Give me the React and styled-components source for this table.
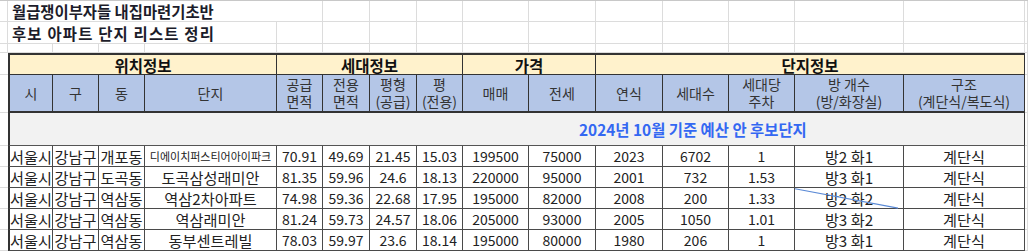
import React from "react";
import styled, { createGlobalStyle } from "styled-components";

const COLS = [45, 46, 46, 132, 46, 47, 47, 46, 66, 67, 67, 66, 66, 109, 121];

const groups = [
  { label: "위치정보", span: 4 },
  { label: "세대정보", span: 4 },
  { label: "가격", span: 2 },
  { label: "단지정보", span: 5 },
];

const subHeads = [
  "시",
  "구",
  "동",
  "단지",
  "공급\n면적",
  "전용\n면적",
  "평형\n(공급)",
  "평\n(전용)",
  "매매",
  "전세",
  "연식",
  "세대수",
  "세대당\n주차",
  "방 개수\n(방/화장실)",
  "구조\n(계단식/복도식)",
];

const rows = [
  ["서울시", "강남구", "개포동", "디에이치퍼스티어아이파크", "70.91", "49.69", "21.45", "15.03", "199500", "75000", "2023", "6702", "1", "방2 화1", "계단식"],
  ["서울시", "강남구", "도곡동", "도곡삼성래미안", "81.35", "59.96", "24.6", "18.13", "220000", "95000", "2001", "732", "1.53", "방3 화1", "계단식"],
  ["서울시", "강남구", "역삼동", "역삼2차아파트", "74.98", "59.36", "22.68", "17.95", "195000", "82000", "2008", "200", "1.33", "방2 화2", "계단식"],
  ["서울시", "강남구", "역삼동", "역삼래미안", "81.24", "59.73", "24.57", "18.06", "205000", "93000", "2005", "1050", "1.01", "방3 화2", "계단식"],
  ["서울시", "강남구", "역삼동", "동부센트레빌", "78.03", "59.97", "23.6", "18.14", "195000", "80000", "1980", "206", "1", "방3 화1", "계단식"],
];

const hasHangul = (v) => /[가-힣]/.test(v);

const GlobalStyle = createGlobalStyle`
  body {
    margin: 0;
    background: #ffffff;
    font-family: "Noto Sans CJK KR", "Noto Sans", sans-serif;
  }
`;

const Sheet = styled.div`
  position: relative;
  display: grid;
  grid-template-columns: 8px ${COLS.map((c) => `${c}px`).join(" ")} 1fr;
  grid-template-rows: 21px 22px 9px 22px 38px 33px repeat(5, 21px);
  border-top: 1px solid #c8c8c8;
  width: 1028px;
`;

const GridCell = styled.div`
  box-sizing: border-box;
  border-right: ${(p) => (p.$noRight ? "none" : "1px solid #dcdcdc")};
  border-bottom: 1px solid #dcdcdc;
`;

const Title = styled.div`
  grid-column: span ${(p) => p.$span};
  box-sizing: border-box;
  border-right: 1px solid #dcdcdc;
  border-bottom: 1px solid #dcdcdc;
  display: flex;
  align-items: center;
  padding-left: 4px;
  font-size: 15.4px;
  font-weight: 700;
  color: #1c1c2a;
  letter-spacing: ${(p) => p.$spacing || 0}px;
  white-space: nowrap;
`;

const GroupHead = styled.div`
  grid-column: span ${(p) => p.$span};
  box-sizing: border-box;
  background: #fff2cc;
  border-top: 2px solid #333;
  border-right: 1px solid #333;
  border-bottom: 1px solid #333;
  border-left: ${(p) => (p.$first ? "2px solid #333" : "none")};
  display: flex;
  align-items: center;
  justify-content: center;
  font-size: 15.5px;
  font-weight: 700;
  color: #111;
`;

const SubHead = styled.div`
  box-sizing: border-box;
  background: #b4c6e7;
  border-right: 1px solid #333;
  border-bottom: 2px solid #333;
  border-left: ${(p) => (p.$first ? "2px solid #333" : "none")};
  display: flex;
  align-items: center;
  justify-content: center;
  text-align: center;
  white-space: pre-line;
  font-size: 14px;
  line-height: 17px;
  color: #333;
`;

const Banner = styled.div`
  grid-column: span 15;
  box-sizing: border-box;
  background: #f2f2f2;
  border-left: 2px solid #333;
  border-right: 1px solid #333;
  border-bottom: 1px solid #555;
  display: flex;
  align-items: center;
  padding-left: 569px;
  font-size: 15.4px;
  font-weight: 700;
  color: #3468f2;
  white-space: nowrap;
`;

const DataCell = styled.div`
  box-sizing: border-box;
  background: #fff;
  border-right: 1px solid #4a4a4a;
  border-bottom: 1px solid #4a4a4a;
  border-left: ${(p) => (p.$first ? "2px solid #333" : "none")};
  display: flex;
  align-items: center;
  justify-content: center;
  font-size: ${(p) => (p.$small ? "11px" : p.$hangul ? "15.2px" : "14px")};
  color: #222;
  white-space: nowrap;
  overflow: hidden;
`;

const Overlay = styled.svg`
  position: absolute;
  left: 0;
  top: 0;
  width: 100%;
  height: 100%;
  pointer-events: none;
`;

function Gridline({ count }) {
  return Array.from({ length: count }, (_, i) => <GridCell key={i} />);
}

export default function App() {
  return (
    <>
      <GlobalStyle />
      <Sheet>
        <GridCell />
        <Title $span={5}>월급쟁이부자들 내집마련기초반</Title>
        <Gridline count={10} />
        <GridCell />

        <GridCell />
        <Title $span={4} $spacing={1.2}>후보 아파트 단지 리스트 정리</Title>
        <Gridline count={11} />
        <GridCell />

        <GridCell />
        <Gridline count={15} />
        <GridCell />

        <GridCell $noRight />
        {groups.map((g, i) => (
          <GroupHead key={g.label} $span={g.span} $first={i === 0}>
            {g.label}
          </GroupHead>
        ))}
        <GridCell />

        <GridCell $noRight />
        {subHeads.map((s, i) => (
          <SubHead key={s} $first={i === 0}>
            {s}
          </SubHead>
        ))}
        <GridCell />

        <GridCell $noRight />
        <Banner>2024년 10월 기준 예산 안 후보단지</Banner>
        <GridCell />

        {rows.map((r, ri) => (
          <React.Fragment key={ri}>
            <GridCell $noRight />
            {r.map((v, ci) => (
              <DataCell
                key={ci}
                $first={ci === 0}
                $small={v.length > 10}
                $hangul={hasHangul(v)}
              >
                {v}
              </DataCell>
            ))}
            <GridCell />
          </React.Fragment>
        ))}

        <Overlay viewBox="0 0 1028 251" preserveAspectRatio="none">
          <line x1="795" y1="188.5" x2="898" y2="208" stroke="#5b8ad6" strokeWidth="1.2" />
        </Overlay>
      </Sheet>
    </>
  );
}
